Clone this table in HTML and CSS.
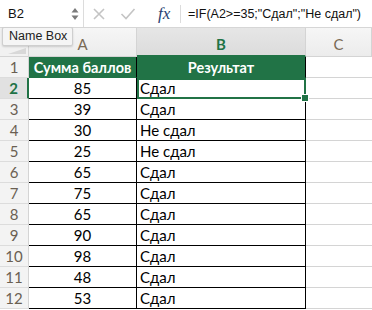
FILE: index.html
```html
<!DOCTYPE html>
<html lang="ru">
<head>
    <meta charset="UTF-8">
    <title>Книга1</title>
    <link rel="stylesheet" href="styles.css">
</head>
<body>
    <div class="formula-bar">
        <div class="name-box">
            <span class="ref">B2</span>
            <span class="spin">
                <svg width="8" height="14" viewBox="0 0 8 14"><path d="M4 1 L7.5 5.5 H0.5 Z M4 13 L7.5 8.5 H0.5 Z" fill="#7a7a7a"/></svg>
            </span>
        </div>
        <div class="bar-btn">
            <svg width="14" height="14" viewBox="0 0 14 14"><path d="M2 2 L12 12 M12 2 L2 12" stroke="#c4c4c4" stroke-width="1.6"/></svg>
        </div>
        <div class="bar-btn">
            <svg width="16" height="14" viewBox="0 0 16 14"><path d="M1.5 7 L6 11.5 L14.5 2" stroke="#c4c4c4" stroke-width="1.6" fill="none"/></svg>
        </div>
        <div class="fx">fx</div>
        <div class="formula">=IF(A2&gt;=35;"Сдал";"Не сдал")</div>
    </div>

    <div class="tooltip">Name Box</div>

    <div class="sheet">
        <div class="corner"><span class="corner-mark"></span></div>
        <div class="col-head">A</div>
        <div class="col-head active">B</div>
        <div class="col-head">C</div>
    </div>

    <script>
        const scores = [85, 39, 30, 25, 65, 75, 65, 90, 98, 48, 53];
        const sheet = document.querySelector('.sheet');

        function addCell(cls, text) {
            const cell = document.createElement('div');
            cell.className = cls;
            cell.textContent = text;
            sheet.appendChild(cell);
            return cell;
        }

        // header row of the table
        addCell('row-head', '1');
        addCell('cell a title', 'Сумма баллов');
        addCell('cell b title', 'Результат');
        addCell('cell c', '');

        scores.forEach((score, i) => {
            const row = i + 2;
            addCell(row === 2 ? 'row-head active' : 'row-head', row);
            addCell('cell a num', score);
            const res = addCell('cell b', score >= 35 ? 'Сдал' : 'Не сдал');
            if (row === 2) {
                res.classList.add('selected');
                const handle = document.createElement('span');
                handle.className = 'fill-handle';
                res.appendChild(handle);
            }
            addCell('cell c', '');
        });
    </script>
</body>
</html>
```

FILE: styles.css
```css
body {
    margin: 0;
    width: 372px;
    height: 310px;
    overflow: hidden;
    background: #ffffff;
    font-family: "Liberation Sans", Arial, sans-serif;
    position: relative;
}

/* Formula bar */
.formula-bar {
    display: flex;
    align-items: center;
    height: 28px;
    border-bottom: 1px solid #d6d6d6;
    box-sizing: border-box;
}

.name-box {
    display: flex;
    align-items: center;
    justify-content: space-between;
    width: 84px;
    height: 100%;
    padding: 0 4px 0 8px;
    box-sizing: border-box;
    border-right: 1px solid #dcdcdc;
    font-size: 13px;
    color: #111;
}

.spin {
    display: flex;
}

.bar-btn {
    display: flex;
    justify-content: center;
    width: 29px;
}

.bar-btn:first-of-type {
    margin-left: 10px;
}

.fx {
    width: 39px;
    padding-left: 16px;
    box-sizing: border-box;
    height: 18px;
    line-height: 18px;
    border-right: 1px solid #dcdcdc;
    font-family: "Liberation Serif", serif;
    font-style: italic;
    font-size: 17px;
    color: #2b3f73;
}

.formula {
    padding-left: 7px;
    font-size: 12.5px;
    color: #111;
    white-space: nowrap;
}

.tooltip {
    position: absolute;
    left: 2px;
    top: 27px;
    padding: 1px 5px 2px 6px;
    background: #f5f5f5;
    border: 1px solid #cfcfcf;
    border-radius: 2px;
    box-shadow: 0 1px 2px rgba(0, 0, 0, 0.15);
    font-size: 12.5px;
    color: #222;
    z-index: 2;
}

/* Grid */
.sheet {
    display: grid;
    grid-template-columns: 29px 108px 169px 1fr;
    grid-template-rows: 29px repeat(12, 21px);
    font-family: Lato, "Open Sans", sans-serif;
}

.corner {
    position: relative;
    background: #f1f1f1;
    border-right: 1px solid #d4d4d4;
    border-bottom: 1px solid #d4d4d4;
}

.corner-mark {
    position: absolute;
    right: 2px;
    bottom: 2px;
    width: 0;
    height: 0;
    border-left: 18px solid transparent;
    border-bottom: 6px solid #d8d8d8;
}

.col-head {
    display: flex;
    align-items: center;
    justify-content: center;
    padding-top: 4px;
    background: linear-gradient(#f6f6f6, #ececec);
    border-right: 1px solid #d4d4d4;
    border-bottom: 1px solid #d4d4d4;
    box-sizing: border-box;
    font-size: 15px;
    color: #7a6a55;
}

.col-head.active {
    background: linear-gradient(#e6e6e6, #dcdcdc);
    border-bottom: 2px solid #217346;
    color: #217346;
    font-weight: bold;
}

.row-head {
    display: flex;
    align-items: center;
    justify-content: center;
    background: #f3f3f3;
    border-right: 1px solid #d4d4d4;
    border-bottom: 1px solid #dcdcdc;
    box-sizing: border-box;
    font-size: 15px;
    color: #6a5f52;
}

.row-head.active {
    background: #e1e1e1;
    border-right: 2px solid #217346;
    color: #217346;
    font-weight: bold;
}

.cell {
    display: flex;
    align-items: center;
    box-sizing: border-box;
    font-size: 15px;
    color: #000;
    white-space: nowrap;
    position: relative;
}

.cell.a,
.cell.b {
    border-right: 1px solid #000;
    border-bottom: 1px solid #000;
}

.cell.a {
    justify-content: center;
}

.cell.b {
    padding-left: 3px;
}

.cell.c {
    border-bottom: 1px solid #d4d4d4;
}

.cell.title {
    background: #217346;
    color: #ffffff;
    font-weight: bold;
    font-size: 14.5px;
    justify-content: center;
    padding-left: 0;
    border-bottom-color: #217346;
}

.cell.a.title {
    border-right-color: #000;
}

.cell.selected {
    outline: 2px solid #217346;
    outline-offset: -2px;
}

.fill-handle {
    position: absolute;
    right: -4px;
    bottom: -4px;
    width: 6px;
    height: 6px;
    background: #217346;
    border: 1px solid #ffffff;
    z-index: 1;
}
```
